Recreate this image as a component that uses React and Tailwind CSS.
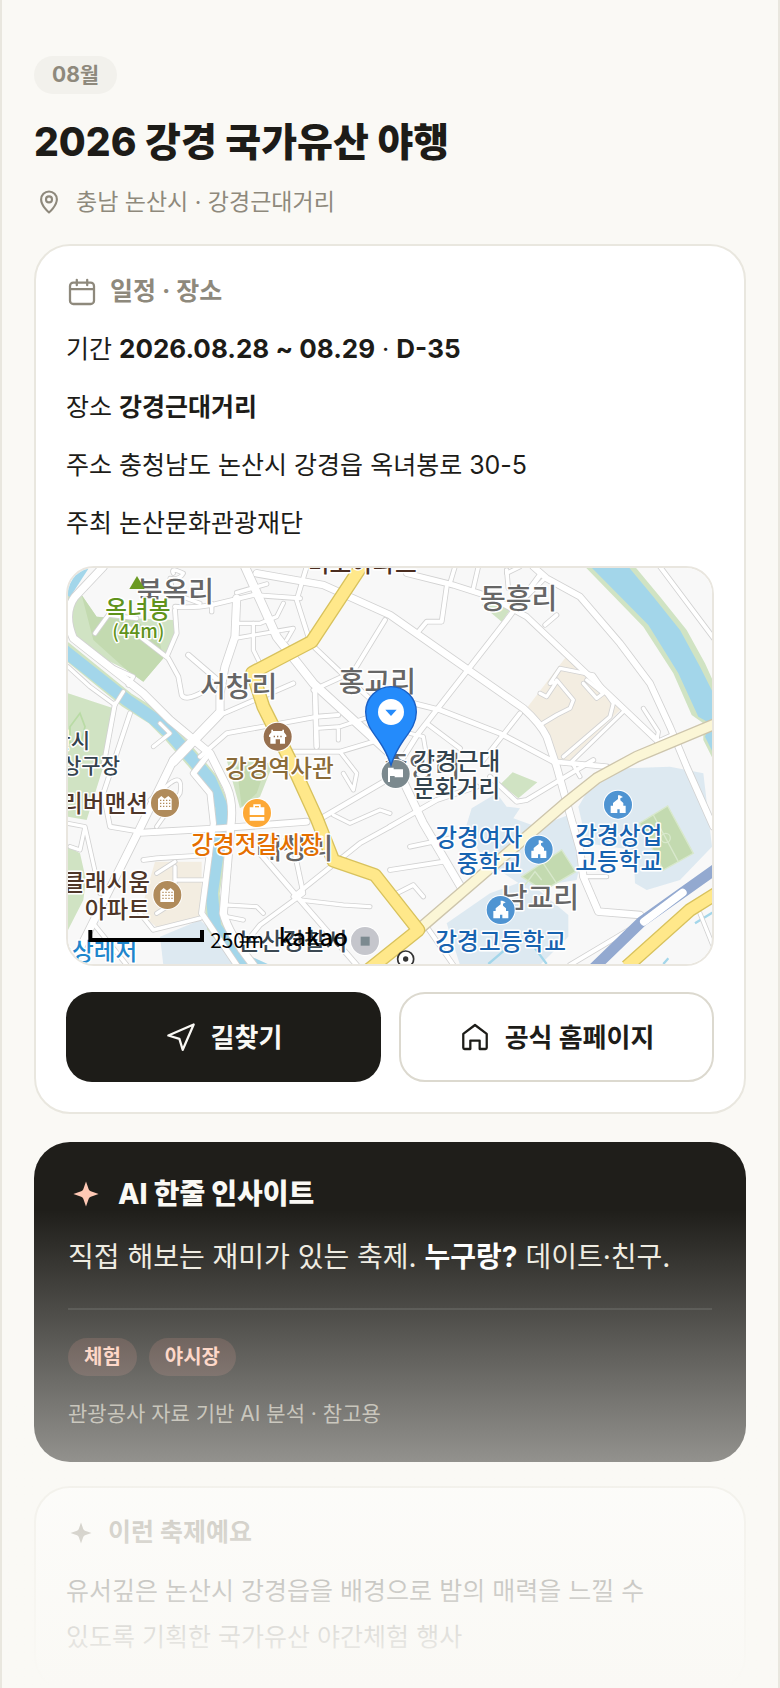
import React from 'react';

const FESTIVAL = {
  month: '08월',
  title: '2026 강경 국가유산 야행',
  region: '충남 논산시 · 강경근대거리',
  tags: ['체험', '야시장'],
};

const LINE = {
  viewBox: '0 0 24 24',
  fill: 'none',
  stroke: 'currentColor',
  strokeWidth: 1.7,
  strokeLinecap: 'round',
  strokeLinejoin: 'round',
  'aria-hidden': true,
};

function PinIcon({ className }) {
  return (
    <svg {...LINE} className={className}>
      <path d="M12 20.4s-6.3-5.4-6.3-10.5a6.3 6.3 0 0 1 12.6 0c0 5.1-6.3 10.5-6.3 10.5z" />
      <circle cx="12" cy="9.9" r="2.4" />
    </svg>
  );
}

function CalendarIcon({ className }) {
  return (
    <svg {...LINE} className={className}>
      <rect x="3" y="5" width="18" height="16" rx="2.5" />
      <path d="M3.5 9.8h17M8.1 2.9v4M15.9 2.9v4" />
    </svg>
  );
}

function NavIcon({ className }) {
  return (
    <svg {...LINE} className={className}>
      <path d="M21.5 2.6 2.5 10.9l8.3 2.5 2.5 8.2z" />
    </svg>
  );
}

function HomeIcon({ className }) {
  return (
    <svg {...LINE} className={className}>
      <path d="M3.2 9.7 12 3l8.8 6.7V20a1 1 0 0 1-1 1h-4.3v-6.3h-7V21H4.2a1 1 0 0 1-1-1z" />
    </svg>
  );
}

function SparkIcon({ className }) {
  return (
    <svg viewBox="0 0 24 24" fill="currentColor" className={className} aria-hidden="true">
      <path d="M12 3.6l1.8 5.2q.4 1 1.400 1.400L20.400 12l-5.200 1.800q-1 .4-1.400 1.400L12 20.400l-1.800-5.200q-.4-1-1.400-1.400L3.600 12l5.200-1.800q1-.4 1.400-1.400z" />
    </svg>
  );
}

// [path, width]
const ROADS = [
  ['M130 20 45 110Q8 160 40 235L250 400 330 480 450 580 500 680Q522 730 512 800L490 1060Q505 1120 580 1215', 22],
  ['M440 590 400 640 450 700 460 790 425 1060 540 1230', 16],
  ['M555 20 650 230 760 370 990 580', 24],
  ['M990 580 1090 790 1205 985', 22],
  ['M345 140Q400 145 455 135L580 105 720 115', 12],
  ['M455 130V155M530 98 620 72', 11],
  ['M740 20 710 120 745 230', 12],
  ['M590 40 790 75 990 165 1390 445Q1440 490 1460 530L1490 620 1560 870 1570 950 1615 1055 1740 1065', 20],
  ['M530 115 525 230 495 320 480 400V455L340 600 235 815 40 1205', 22],
  ['M480 460 340 605', 26],
  ['M105 220 145 165 230 175', 11],
  ['M195 195 325 295 355 350 365 405Q375 425 430 395', 12],
  ['M345 150 350 220 320 290', 12],
  ['M340 40Q330 20 370 40 360 60 330 55L340 100 420 130', 10],
  ['M385 285 490 375', 14],
  ['M525 190H600L650 170 670 130', 10],
  ['M525 235 700 205 680 240', 10],
  ['M580 190V270L610 330', 10],
  ['M480 465 700 370', 12],
  ['M765 390 770 560', 14],
  ['M420 590 500 520 770 470 835 465', 12],
  ['M770 505 840 500 930 470M835 500V540', 10],
  ['M740 240 840 335 990 470', 12],
  ['M975 180 880 335 760 390', 12],
  ['M690 575 840 575 990 530', 12],
  ['M840 575 890 640 880 690 850 640', 10],
  ['M775 780 980 660', 14],
  ['M245 818 480 805 740 785', 18],
  ['M250 900 290 895 450 885', 12],
  ['M700 860 730 1000 600 1095 540 1170', 12],
  ['M700 1010 900 850 990 800', 12],
  ['M600 880 720 1020 890 1215', 14],
  ['M500 1035 590 1040 610 1060M500 1070 550 1080', 10],
  ['M720 1020 850 1035 930 1040', 10],
  ['M820 765 870 790 960 750 990 760', 10],
  ['M210 460 130 700 150 800 240 815', 12],
  ['M165 430 130 620', 12],
  ['M24 320 90 380 165 435 190 395', 10],
  ['M24 790 75 800 60 870 30 860M75 800 120 1000', 10],
  ['M165 325 220 350 205 375', 11],
  ['M280 560 330 520 300 490', 10],
  ['M270 720 330 670Q370 640 360 700L290 800', 10],
  ['M345 920V1000M345 960H430M290 940 345 905M290 1060 345 1025', 10],
  ['M240 1060 280 1110 420 1075M100 1090 200 1215', 11],
  ['M1440 45 1340 180 1075 520 1000 640', 14],
  ['M1040 40 1180 75 1290 110 1400 170 1790 540', 16],
  ['M1160 80 1145 185 1100 185 1075 215', 12],
  ['M1185 20 1170 70M1255 20 1240 85M1340 30 1345 85', 11],
  ['M1455 195 1490 165', 11],
  ['M1420 20 1460 55 1560 110 1680 250 1770 370 1830 500 1880 620 1960 800', 18],
  ['M1380 20 1340 40M1450 60 1400 110', 10],
  ['M1800 20 1965 240', 12],
  ['M1060 430 1140 450 1320 520 1480 605 1640 620', 14],
  ['M1100 490 1200 565', 12],
  ['M1380 460 1270 600', 12],
  ['M1050 520 1090 530 1100 590', 10],
  ['M990 800 1130 720 1250 680', 13],
  ['M1050 860 1170 835M990 930 1150 905', 12],
  ['M1290 650 1370 725 1400 720 1600 600', 12],
  ['M1010 1000 1060 975 1090 1010', 11],
  ['M1540 615 1560 650M1570 950H1640', 10],
  ['M1750 445 1795 515 1790 545M1790 545 1835 525', 10],
  ['M1440 400 1460 410 1490 365 1470 370 1500 325 1600 345 1660 430 1650 470 1510 590', 10],
  ['M1490 360 1540 420 1530 445 1490 465 1440 495M1570 370 1610 415 1630 400 1580 360', 10],
  ['M1530 610 1690 455', 10],
  ['M1100 1100 1180 1215M1530 1215 1740 1090', 12],
  ['M1920 1060 1960 1160V1215', 10],
];

function Roads() {
  return (
    <g fill="none" strokeLinecap="round" strokeLinejoin="round">
      <g stroke="#d2d2d2">
        {ROADS.map(([d, w]) => <path key={d} d={d} strokeWidth={w + 5} />)}
      </g>
      <g stroke="#ffffff">
        {ROADS.map(([d, w]) => <path key={d} d={d} strokeWidth={w} />)}
      </g>
    </g>
  );
}

function Label({ x, y, size = 71, color, anchor = 'start', children }) {
  return (
    <text x={x} y={y} fontSize={size} fill={color} textAnchor={anchor} fontWeight="500"
      stroke="#ffffff" strokeWidth="9" strokeLinejoin="round" paintOrder="stroke">
      {children}
    </text>
  );
}

function Dot({ x, y, color, children }) {
  return (
    <g transform={`translate(${x} ${y})`}>
      <circle r="45" fill="#ffffff" />
      <circle r="42" fill={color} />
      {children}
    </g>
  );
}

function School({ x, y }) {
  return (
    <Dot x={x} y={y} color="#4f94d2">
      <path fill="#ffffff" d="M5-28 15-23 7-19v6l9 8v8h7v22H5V14h-7v11h-20V3h7v-8l15-12V-28z" />
    </Dot>
  );
}

function Apartment({ x, y }) {
  return (
    <Dot x={x} y={y} color="#b08b5b">
      <path fill="#ffffff" d="M-21 21v-33l10-9 10 8 11-8 10 9v33z" />
      <path stroke="#b08b5b" strokeWidth="4" strokeDasharray="4 5" d="M-15-8h32M-15 1h32M-15 10h32" />
    </Dot>
  );
}

function FestivalMap() {
  return (
    <div className="mt-5 h-[400px] overflow-hidden rounded-[28px] border-2 border-[#e9e6df]">
      <svg viewBox="24 24 1932 1188" preserveAspectRatio="xMidYMid slice" role="img" aria-label="강경근대거리 지도"
        className="block h-full w-full font-['Noto_Sans_CJK_KR',sans-serif]">
        <rect x="0" y="0" width="2000" height="1240" fill="#f8f8f8" />

        {/* parks */}
        <path fill="#d0e3c3" d="M24 90 65 105 110 170 340 180 355 220 310 295 250 365 200 330 40 250 24 190zM24 400 160 445 130 620 80 780 24 770zM24 860 60 880 78 960 70 1020 24 1110zM500 600 640 610 600 710 540 745z" />
        <path fill="#c3dab0" d="M65 105 110 170 230 180 300 250 310 295 250 365 200 330 100 240zM530 620 620 615 590 700 545 740z" />
        <path fill="#d0e3c3" d="M1265 135 1290 120 1350 150 1325 185zM1322 672 1358 637 1432 667 1375 715z" />
        <path fill="none" stroke="#b9dba5" strokeWidth="5" d="M30 500 60 460 75 500 65 540 30 550z" />

        {/* blocks */}
        <path fill="#f3ede1" d="M1520 288 1690 440 1525 605H1492L1460 510 1400 445zM285 905H425V1065L300 1110 240 1060z" />
        <path fill="#dde9f1" d="M1218 800 1235 745 1310 700 1340 740 1380 745 1360 775 1430 800 1540 760 1565 890 1550 960 1400 985 1270 900z" />
        <path fill="#dde9f1" d="M1160 1090 1290 1000 1400 960 1525 1065V1130L1440 1215H1200z" />
        <path fill="#dde9f1" d="M1555 740 1590 680 1700 625 1830 620 1930 640 1956 860 1860 960 1760 990 1725 970 1720 870 1580 850z" />
        <path fill="#dde9f1" d="M300 1130 420 1080 540 1190 520 1215H310z" />
        <g fill="#c3dab0" stroke="#d8e8cc" strokeWidth="4">
          <path d="M1738 790 1823 738 1900 880 1810 930z" />
          <path d="M1385 950 1505 870 1547 935 1450 992z" />
          <path fill="none" d="M1780 765 1855 905M1450 910 1490 970M1395 975 1425 935 1445 960" />
          <circle cx="1817" cy="834" r="14" fill="none" />
        </g>

        {/* rivers */}
        <path fill="none" stroke="#d0e3c3" strokeWidth="48" d="M10 265 200 420 280 470 330 520 400 600 450 660 485 740 480 830 455 1000 465 1100 560 1220" />
        <path fill="none" stroke="#a3d6ea" strokeWidth="37" strokeLinejoin="round" d="M10 270 200 420 280 475 330 520 400 600 450 660 485 740 480 830 455 1000 465 1100 530 1190 640 1240" />
        <path fill="none" stroke="#a3d6ea" strokeWidth="24" d="M20 105 75 20" />
        <path fill="#d0e3c3" d="M1575 20H1725L1800 110 1880 210 1935 310 1960 365V600L1930 540 1930 490 1895 465 1840 340 1750 200z" />
        <path fill="#a3d6ea" d="M1592 20H1705L1780 110 1860 210 1920 320 1960 400V580L1935 530 1950 490 1915 470 1855 340 1765 195z" />
        <path fill="none" stroke="#a3d6ea" strokeWidth="7" d="M1285 1212 1340 1165M1425 1165 1460 1212M1905 1090 1970 1050M1810 1212 1825 1195" />

        <Roads />

        {/* trunk roads and the railway */}
        <g fill="none" strokeLinejoin="round">
          <path stroke="#cdc5ac" strokeWidth="36" d="M1970 490 1730 590 1610 655 1510 735 1080 1105" />
          <path stroke="#fbf6d6" strokeWidth="28" d="M1970 490 1730 590 1610 655 1510 735 1080 1105" />
          <path stroke="#d8c25d" strokeWidth="42" d="M910 10 755 245 577 338 610 440 690 600 770 775 820 902 945 945 1075 1110 925 1230" />
          <path stroke="#ffe88a" strokeWidth="34" d="M910 10 755 245 577 338 610 440 690 600 770 775 820 902 945 945 1075 1110 925 1230" />
          <path stroke="#d8c25d" strokeWidth="42" d="M1970 1000 1890 1050 1700 1220" />
          <path stroke="#ffe88a" strokeWidth="34" d="M1970 1000 1890 1050 1700 1220" />
          <path stroke="#93a9d0" strokeWidth="32" d="M1970 925 1745 1085 1600 1225" />
          <path stroke="#ffffff" strokeWidth="24" strokeLinecap="round" d="M1752 1085 1868 998" />
        </g>

        {/* district names sit under the places */}
        <Label x={230} y={125} size={84} color="#666666">북옥리</Label>
        <Label x={420} y={412} size={84} color="#666666">서창리</Label>
        <Label x={836} y={396} size={84} color="#666666">홍교리</Label>
        <Label x={1260} y={146} size={84} color="#666666">동흥리</Label>
        <Label x={970} y={650} size={84} color="#666666">중앙리</Label>
        <Label x={1325} y={1045} size={84} color="#666666">남교리</Label>
        <Label x={588} y={898} size={84} color="#666666">대창리</Label>

        <Label x={1070} y={36} anchor="end" color="#4a2d20">미소아파트</Label>
        <path fill="#6a9a22" d="M208 87 231 48 254 87z" />
        <Label x={136} y={174} color="#5f931c">옥녀봉</Label>
        <Label x={157} y={235} size={56} color="#5f931c">(44m)</Label>
        <Label x={90} y={565} size={63} anchor="end" color="#35434e">논산시</Label>
        <Label x={180} y={640} size={63} anchor="end" color="#35434e">상구장</Label>
        <Label x={495} y={652} color="#8a6b38">강경역사관</Label>
        <Label x={264} y={757} anchor="end" color="#4e3629">리버맨션</Label>
        <Label x={270} y={992} anchor="end" color="#4e3629">클래시움</Label>
        <Label x={270} y={1073} anchor="end" color="#4e3629">아파트</Label>
        <Label x={394} y={880} color="#e56f00">강경젓갈시장</Label>
        <Label x={1126} y={857} color="#1763b0">강경여자</Label>
        <Label x={1386} y={937} anchor="end" color="#1763b0">중학교</Label>
        <Label x={1676} y={851} anchor="middle" color="#1763b0">강경상업</Label>
        <Label x={1676} y={931} anchor="middle" color="#1763b0">고등학교</Label>
        <Label x={1322} y={1170} anchor="middle" color="#1763b0">강경고등학교</Label>
        <Label x={232} y={1201} anchor="end" color="#1f86cc">수상레저</Label>
        <Label x={862} y={1170} anchor="end" color="#3b4852">논산경찰서</Label>

        <Dot x={653} y={530} color="#97704f">
          <path fill="#ffffff" d="M-19-21h5v4h28v-4h5v8l7 9v5h-4v20H7V8H-6v13h-16V1h-4v-5l7-9z" />
          <path stroke="#97704f" strokeWidth="4" d="M-10-3v5M0-3v5M10-3v5" />
        </Dot>
        <Apartment x={315} y={729} />
        <Apartment x={322} y={1005} />
        <Dot x={591} y={759} color="#fda835">
          <path fill="#ffffff" d="M-22 2v-19h11v-9h22v9h11V6h-44zM-22 12h44v11h-44z" />
          <path fill="#fda835" d="M-6-21H6v4H-6z" />
        </Dot>
        <School x={1436} y={869} />
        <School x={1674} y={734} />
        <School x={1322} y={1050} />
        <Dot x={915} y={1143} color="#c5c6cc">
          <path fill="#7c8a90" d="M-13-13h27v27h-27z" />
        </Dot>
        <circle cx="1037" cy="1197" r="24" fill="#ffffff" stroke="#333333" strokeWidth="5" />
        <circle cx="1037" cy="1197" r="8" fill="#333333" />

        {/* venue */}
        <Dot x={1007} y={642} color="#7b898e">
          <path fill="#ffffff" d="M-23-19h17v5h28v24H-3v-4h-14v18h-6z" />
        </Dot>
        <Label x={1060} y={630} color="#33434d">강경근대</Label>
        <Label x={1060} y={710} color="#33434d">문화거리</Label>
        <path fill="#248bfb" stroke="#1a5fc4" strokeWidth="4"
          d="M993 380a76 76 0 0 0-76 76c0 34 18 56 38 84 18 26 30 50 38 76 8-26 20-50 38-76 20-28 38-50 38-84a76 76 0 0 0-76-76z" />
        <circle cx="993" cy="456" r="39" fill="#ffffff" />
        <path fill="#248bfb" d="M976 449h34l-17 19z" />

        <path fill="none" stroke="#000000" strokeWidth="12" d="M91 1110v30h335v-30" />
        <text x="451" y="1163" fontSize="62" fill="#000000">250m</text>
        <text x="656" y="1157" fontSize="72" fontWeight="500" fill="#000000">kakao</text>
      </svg>
    </div>
  );
}

export default function App() {
  return (
    <main className="relative h-screen overflow-hidden border-x-2 border-[#e9e7df] bg-[#faf9f5] px-8 pt-14 font-[Inter,'Noto_Sans_CJK_KR',sans-serif] text-[25px] font-normal text-[#1d1c18]">
      <header>
        <span className="inline-flex h-[38px] items-center rounded-full bg-[#f2f1ec] px-[18px] align-top text-[21px] font-bold text-[#8e897c]">
          {FESTIVAL.month}
        </span>
        <h1 className="mt-6 text-[39px] leading-[48px] font-extrabold">{FESTIVAL.title}</h1>
        <p className="mt-4 flex h-10 items-center gap-3 text-[23px] text-[#8e897c]">
          <PinIcon className="size-[30px] shrink-0" />
          {FESTIVAL.region}
        </p>
      </header>

      {/* schedule and place */}
      <section className="mt-[22px] rounded-[36px] border-2 border-[#e9e7df] bg-white p-[30px]">
        <h2 className="flex h-8 items-center gap-3 font-bold text-[#8e897c]">
          <CalendarIcon className="size-8 shrink-0" />
          일정 · 장소
        </h2>
        <div className="mt-[18px] flex flex-col gap-3 leading-[46px]">
          <p>기간 <b className="text-[26px]">2026.08.28 ~ 08.29</b> · <b className="text-[26px]">D-35</b></p>
          <p>장소 <b>강경근대거리</b></p>
          <p>주소 충청남도 논산시 강경읍 옥녀봉로 30-5</p>
          <p>주최 논산문화관광재단</p>
        </div>

        <FestivalMap />

        <div className="mt-[26px] grid grid-cols-2 gap-[18px] text-[26px] font-bold">
          <a href="#directions" className="flex h-[90px] items-center justify-center gap-[14px] rounded-[26px] bg-[#1d1c18] text-[#faf9f5]">
            <NavIcon className="size-8 shrink-0" />
            길찾기
          </a>
          <a href="#homepage" className="flex h-[90px] items-center justify-center gap-[14px] rounded-[26px] border-2 border-[#dcd9cf] bg-white">
            <HomeIcon className="size-8 shrink-0" />
            공식 홈페이지
          </a>
        </div>
      </section>

      {/* AI insight */}
      <section className="mt-7 rounded-[36px] bg-[#1f1e1a] p-[34px] text-[28px]">
        <h2 className="flex h-9 items-center gap-[14px] font-extrabold text-[#faf9f5]">
          <SparkIcon className="size-9 shrink-0 text-[#ffc9b5]" />
          AI 한줄 인사이트
        </h2>
        <p className="mt-[22px] leading-[46px] text-[#eeebe0]">
          직접 해보는 재미가 있는 축제. <b className="text-white">누구랑?</b> 데이트·친구.
        </p>
        <hr className="mt-7 border-t-2 border-white/10" />
        <ul className="mt-7 flex gap-3">
          {FESTIVAL.tags.map((tag) => (
            <li key={tag} className="flex h-[38px] items-center rounded-full bg-[#ff967d]/15 px-4 text-[20px] font-bold text-[#ffc9b5]">
              {tag}
            </li>
          ))}
        </ul>
        <p className="mt-6 text-[21px] leading-7 text-[#a5a194]">관광공사 자료 기반 AI 분석 · 참고용</p>
      </section>

      <section className="mt-6 rounded-[36px] border-2 border-[#e9e7df] bg-white p-[30px]">
        <h2 className="flex h-[30px] items-center gap-3 font-bold text-[#8e897c]">
          <SparkIcon className="size-[30px] shrink-0" />
          이런 축제예요
        </h2>
        <p className="mt-5 leading-[46px] break-keep">
          유서깊은 논산시 강경읍을 배경으로 밤의 매력을 느낄 수 있도록 기획한 국가유산 야간체험 행사
        </p>
      </section>

      {/* preview fades out towards the bottom */}
      <div className="pointer-events-none absolute inset-x-0 bottom-0 h-[478px] bg-linear-to-b from-[#faf9f5]/0 to-[#faf9f5]" />
    </main>
  );
}
